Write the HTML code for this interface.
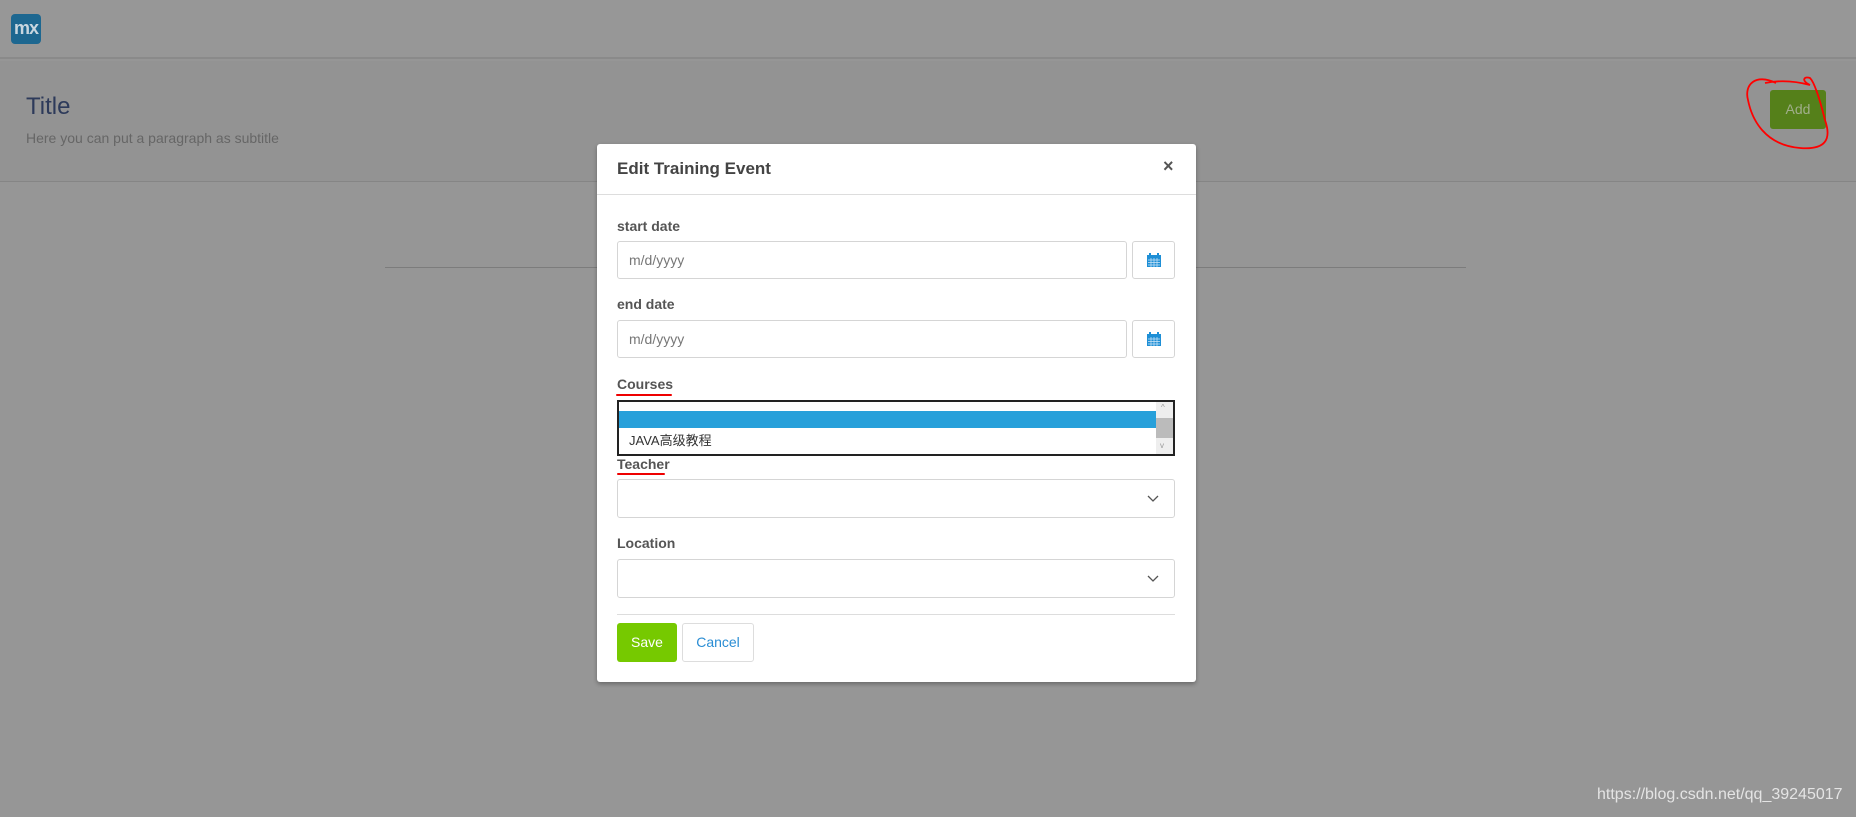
<!DOCTYPE html>
<html><head><meta charset="utf-8"><style>
*{box-sizing:border-box;margin:0;padding:0}
body{width:1856px;height:817px;overflow:hidden;background:#969696;font-family:"Liberation Sans","Noto Sans CJK SC",sans-serif;position:relative}
.abs{position:absolute}
.nav{left:0;top:0;width:1856px;height:59px;background:#979797;border-bottom:2px solid #8a8a8a}
.logo{left:11px;top:14px;width:30px;height:30px;background:#1d6790;border-radius:4px;color:#c8d6df;font-weight:bold;font-size:18px;line-height:28px;text-align:center;letter-spacing:-1px}
.hdr{left:0;top:61px;width:1856px;height:121px;background:#939393;border-bottom:1px solid #858585}
.title{left:26px;top:93px;font-size:24px;color:#2d3a5a}
.sub{left:26px;top:130px;font-size:14px;color:#666}
.add{left:1770px;top:90px;width:56px;height:39px;background:#55801a;border-radius:3px;color:#a0ae8a;font-size:14px;line-height:39px;text-align:center}
.line{left:385px;top:267px;width:1081px;height:1px;background:#7c7c7c}
.modal{left:597px;top:144px;width:599px;height:538px;background:#fff;border-radius:3px;box-shadow:0 2px 4px rgba(0,0,0,.3)}
.mh{left:0;top:0;width:599px;height:51px;border-bottom:1px solid #ddd}
.mt{left:20px;top:15px;font-size:17px;font-weight:bold;color:#444}
.x{left:566px;top:12px;font-size:18px;font-weight:bold;color:#555}
.lbl{font-size:14px;font-weight:bold;color:#555}
.inp{border:1px solid #d5d5d5;border-radius:3px;background:#fff}
.ph{font-size:14px;color:#777;padding-left:11px;line-height:36px}
.cal{width:43px;height:38px}
.chev{right:14px;top:12px}
.btn{border-radius:3px;font-size:14px;text-align:center;line-height:39px}
.u{height:2px;background:#e00;border-radius:2px}
.wm{left:1597px;top:786px;font-size:16px;color:#e4e4e4}
</style></head><body>
<div class="abs nav"></div>
<div class="abs logo">mx</div>
<div class="abs hdr"></div>
<div class="abs title">Title</div>
<div class="abs sub">Here you can put a paragraph as subtitle</div>
<div class="abs add">Add</div>
<svg class="abs" style="left:1740px;top:75px" width="100" height="85"><path d="M36 8 C15 -2 4 10 8 25 C12 45 25 70 60 73 C85 75 92 65 85 45 C80 25 75 8 70 3 C65 1 60 5 70 10 C55 6 40 5 25 8" fill="none" stroke="#f00" stroke-width="1.8"/></svg>
<div class="abs line"></div>
<div class="abs modal">
 <div class="abs mh"></div>
 <div class="abs mt">Edit Training Event</div>
 <div class="abs x">×</div>
 <div class="abs lbl" style="left:20px;top:74px">start date</div>
 <div class="abs inp" style="left:20px;top:97px;width:510px;height:38px"><div class="ph">m/d/yyyy</div></div>
 <div class="abs inp cal" style="left:535px;top:97px"><svg class="abs" style="left:14px;top:11px" width="14" height="14"><rect x="0" y="2" width="14" height="12" fill="#1e8fd6"/><rect x="2" y="0" width="2" height="3" fill="#1e8fd6"/><rect x="10" y="0" width="2" height="3" fill="#1e8fd6"/><path d="M1 7H13M1 9.5H13M1 12H13M4 5V14M7 5V14M10 5V14" stroke="#cfe6f7" stroke-width=".7"/></svg></div>
 <div class="abs lbl" style="left:20px;top:152px">end date</div>
 <div class="abs inp" style="left:20px;top:176px;width:510px;height:38px"><div class="ph">m/d/yyyy</div></div>
 <div class="abs inp cal" style="left:535px;top:176px"><svg class="abs" style="left:14px;top:11px" width="14" height="14"><rect x="0" y="2" width="14" height="12" fill="#1e8fd6"/><rect x="2" y="0" width="2" height="3" fill="#1e8fd6"/><rect x="10" y="0" width="2" height="3" fill="#1e8fd6"/><path d="M1 7H13M1 9.5H13M1 12H13M4 5V14M7 5V14M10 5V14" stroke="#cfe6f7" stroke-width=".7"/></svg></div>
 <div class="abs lbl" style="left:20px;top:232px">Courses</div>
 <div class="abs u" style="left:19px;top:250px;width:56px"></div>
 <div class="abs" style="left:20px;top:256px;width:558px;height:56px;border:2px solid #222;background:#fff">
  <div class="abs" style="left:0;top:9px;width:537px;height:17px;background:#27a0da"></div>
  <div class="abs" style="left:10px;top:28px;font-size:13px;color:#333">JAVA高级教程</div>
  <div class="abs" style="left:537px;top:0;width:17px;height:52px;background:#eee"><div class="abs" style="left:0;top:16px;width:17px;height:20px;background:#bbb"></div><div class="abs" style="left:5px;top:1px;font-size:8px;color:#999">^</div><div class="abs" style="left:4px;top:39px;font-size:8px;color:#999">v</div></div>
 </div>
 <div class="abs lbl" style="left:20px;top:312px">Teacher</div>
 <div class="abs u" style="left:20px;top:329px;width:48px"></div>
 <div class="abs inp" style="left:20px;top:335px;width:558px;height:39px"><svg class="abs chev" width="14" height="14"><path d="M2 4L7 9L12 4" fill="none" stroke="#555" stroke-width="1.3"/></svg></div>
 <div class="abs lbl" style="left:20px;top:391px">Location</div>
 <div class="abs inp" style="left:20px;top:415px;width:558px;height:39px"><svg class="abs chev" width="14" height="14"><path d="M2 4L7 9L12 4" fill="none" stroke="#555" stroke-width="1.3"/></svg></div>
 <div class="abs" style="left:20px;top:470px;width:558px;height:1px;background:#ddd"></div>
 <div class="abs btn" style="left:20px;top:479px;width:60px;height:39px;background:#76c900;color:#fff">Save</div>
 <div class="abs btn" style="left:85px;top:479px;width:72px;height:39px;border:1px solid #ddd;color:#2a8dd4;line-height:37px">Cancel</div>
</div>
<div class="abs wm">https://blog.csdn.net/qq_39245017</div>
</body></html>
